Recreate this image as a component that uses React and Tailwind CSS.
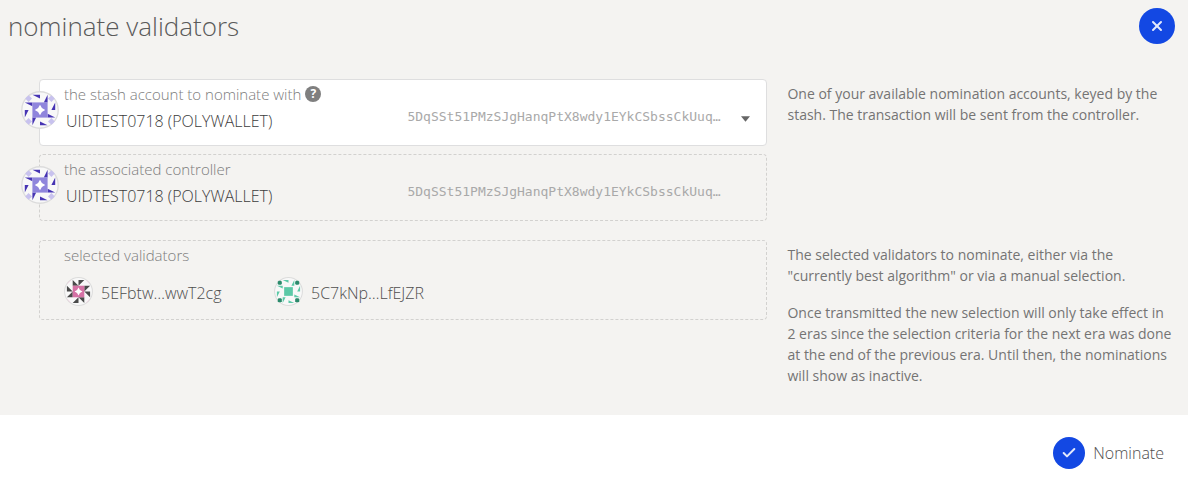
import React from "react";
import { Check, X } from "lucide-react";

const ADDRESS = "5DqSSt51PMzSJgHanqPtX8wdy1EYkCSbssCkUuq…";

const ICONS = {
  purple: {
    side: "#4634b3",
    middle: "#8f85dc",
    corner: "#c8c2ee",
    wedge: "M12 4H20V8Z M28 4V12H24Z",
    corners: "M8 4.4L11.6 8L8 11.6L4.4 8Z",
    star: true,
  },
  pink: {
    side: "#4a4a4a",
    middle: "#d572a5",
    corner: "#f0cfdf",
    wedge: "M12 4V12H20Z M20 4H28L20 12Z",
    corners: "M4.5 10L10 4.5L9 4.5L4.5 9Z",
    star: true,
  },
  green: {
    side: "#5cc9a7",
    middle: "#5cc9a7",
    corner: "#2a8a6b",
    wedge: "M12 4H20V8Z M28 4V12H24Z",
    corners: "M6.5 5.2H9.5L10.8 6.5V9.5L9.5 10.8H6.5L5.2 9.5V6.5Z",
    star: false,
  },
};

const Identicon = ({ type, className }) => {
  const icon = ICONS[type];
  return (
    <svg viewBox="0 0 40 40" className={className} aria-hidden="true">
      <circle cx="20" cy="20" r="19.2" fill="#f8f8f8" stroke="#dcdcdc" strokeWidth="1.4" />
      {[0, 90, 180, 270].map(angle => (
        <g key={angle} transform={`rotate(${angle} 20 20)`}>
          <path d={icon.wedge} fill={icon.side} />
          <path d={icon.corners} fill={icon.corner} />
        </g>
      ))}
      {icon.star ? (
        <>
          <path d="M12 12H28V28H12Z" fill={icon.middle} />
          <path d="M20 14.5L22 18L25.5 20L22 22L20 25.5L18 22L14.5 20L18 18Z" fill="#fff" />
        </>
      ) : (
        <path d="M14 14H26V26H14Z" fill={icon.middle} />
      )}
    </svg>
  )
};

const Address = () => (
  <span className="w-[322px] shrink-0 font-['DejaVu_Sans_Mono',monospace] text-[13px] leading-5 whitespace-nowrap text-[#a9a9a9]">
    {ADDRESS}
  </span>
);

const Validator = ({ type, name }) => (
  <div className="flex w-[210px] items-center gap-2">
    <Identicon type={type} className="size-[29px]" />
    <span className="pt-[2px] text-[16px] leading-6 text-[#4e4e4e]">{name}</span>
  </div>
);

const App = () => {
  return (
    <div className="bg-white font-['Open_Sans',sans-serif] font-light">
      <div className="bg-[#f4f3f1] pb-[29px]">
        <header className="flex items-start justify-between pt-2 pr-[13px] pl-2">
          <h1 className="text-[26px] leading-9 text-[#5a5a5a]">nominate validators</h1>
          <button type="button" aria-label="Close" className="flex size-9 items-center justify-center rounded-full bg-[#1348e3] text-[#e4eafc]">
            <X size={16} strokeWidth={3} />
          </button>
        </header>

        <main className="mt-[35px] grid grid-cols-[15fr_8fr] gap-x-5 gap-y-[19px] pr-3 pl-[39px]">
          <div className="flex flex-col gap-2">
            <div className="relative h-[67px] rounded border border-[#dededf] bg-white pt-[3px] pl-6">
              <Identicon type="purple" className="absolute top-[11px] -left-[19px] size-[38px]" />
              <div className="flex items-center gap-1 leading-[22px]">
                <label htmlFor="stash" className="text-[15px] text-[#7c7c7c]">the stash account to nominate with</label>
                <span className="flex size-4 items-center justify-center rounded-full bg-[#7f7f7f] text-[12px] font-bold text-white">?</span>
              </div>
              <select id="stash" className="mt-[2px] block h-7 w-full appearance-none bg-transparent pl-[2px] text-[16px] text-[#3c3c3c]">
                <option>UIDTEST0718 (POLYWALLET)</option>
              </select>
              <div className="pointer-events-none absolute right-4 bottom-[18px] flex items-center gap-3">
                <Address />
                <svg viewBox="0 0 10 6" className="mt-1 h-[6px] w-[9px] fill-[#666]" aria-hidden="true">
                  <path d="M0 0H10L5 6Z" />
                </svg>
              </div>
            </div>

            <div className="relative h-[67px] rounded border border-dashed border-[#d2d1cf] pt-[3px] pl-6">
              <Identicon type="purple" className="absolute top-[11px] -left-[19px] size-[38px]" />
              <label htmlFor="controller" className="block text-[15px] leading-[22px] text-[#7c7c7c]">the associated controller</label>
              <div className="mt-[2px] flex h-7 items-start justify-between pr-[37px] pl-[2px]">
                <input id="controller" readOnly value="UIDTEST0718 (POLYWALLET)" className="h-7 w-60 bg-transparent text-[16px] text-[#3c3c3c]" />
                <Address />
              </div>
            </div>
          </div>

          <div className="pt-1 pr-1 text-[14px] leading-[21px] font-normal text-[#747474]">
            <p>One of your available nomination accounts, keyed by the stash. The transaction will be sent from the controller.</p>
          </div>

          <section className="self-start rounded border border-dashed border-[#d2d1cf] px-6 pt-[3px] pb-[13px]">
            <h2 className="text-[15px] leading-[22px] text-[#7c7c7c]">selected validators</h2>
            <div className="mt-[11px] flex">
              <Validator type="pink" name="5EFbtw…wwT2cg" />
              <Validator type="green" name="5C7kNp…LfEJZR" />
            </div>
          </section>

          <div className="flex flex-col gap-4 pt-1 pr-1 text-[14px] leading-[21px] font-normal text-[#747474]">
            <p>The selected validators to nominate, either via the "currently best algorithm" or via a manual selection.</p>
            <p>Once transmitted the new selection will only take effect in 2 eras since the selection criteria for the next era was done at the end of the previous era. Until then, the nominations will show as inactive.</p>
          </div>
        </main>
      </div>

      <footer className="flex justify-end px-6 pt-[22px] pb-2">
        <button type="button" className="flex items-center gap-2 text-[16px] text-[#4e4e4e]">
          <span className="flex size-8 items-center justify-center rounded-full bg-[#1348e3] text-[#e4eafc]">
            <Check size={16} strokeWidth={3} />
          </span>
          Nominate
        </button>
      </footer>
    </div>
  )
};

export default App;
